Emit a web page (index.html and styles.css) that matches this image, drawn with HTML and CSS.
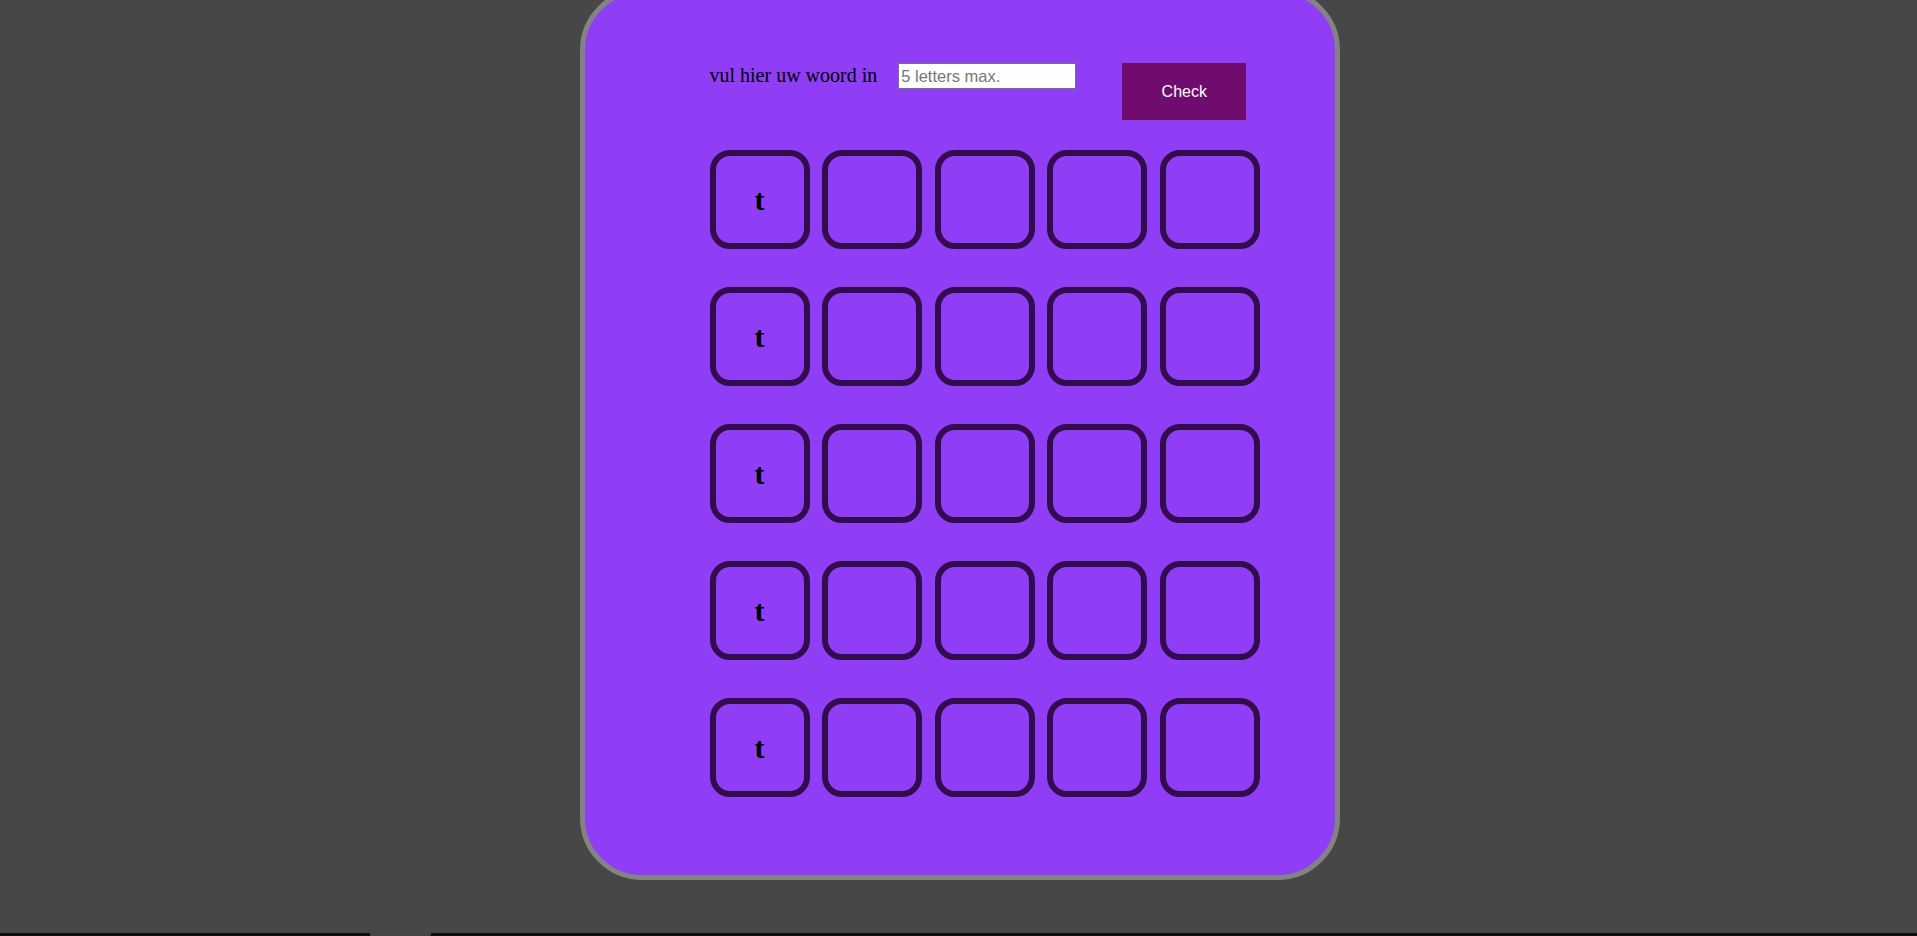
FILE: index.html
```html
<!DOCTYPE html>
<html lang="nl">
<head>
<meta charset="utf-8">
<title>Woord raden</title>
<link rel="stylesheet" href="styles.css">
</head>
<body>
<main class="card">
  <form class="entry">
    <label class="entry-label" for="woord">vul hier uw woord in</label>
    <input class="entry-input" id="woord" type="text" placeholder="5 letters max." maxlength="5">
    <button class="check-btn" type="button">Check</button>
  </form>
  <div class="board">
    <div class="row"><div class="tile">t</div><div class="tile"></div><div class="tile"></div><div class="tile"></div><div class="tile"></div></div>
    <div class="row"><div class="tile">t</div><div class="tile"></div><div class="tile"></div><div class="tile"></div><div class="tile"></div></div>
    <div class="row"><div class="tile">t</div><div class="tile"></div><div class="tile"></div><div class="tile"></div><div class="tile"></div></div>
    <div class="row"><div class="tile">t</div><div class="tile"></div><div class="tile"></div><div class="tile"></div><div class="tile"></div></div>
    <div class="row"><div class="tile">t</div><div class="tile"></div><div class="tile"></div><div class="tile"></div><div class="tile"></div></div>
  </div>
</main>
<div class="taskbar"><span class="taskbar-gap"></span></div>
</body>
</html>
```

FILE: styles.css
```css
html, body {
  margin: 0;
  padding: 0;
}
body {
  background: #474747;
  height: 936px;
  overflow: hidden;
  display: flex;
  flex-direction: column;
  align-items: center;
  font-family: "Liberation Serif", "Times New Roman", serif;
}
.card {
  box-sizing: border-box;
  width: 760px;
  height: 892px;
  margin-top: -12px;
  margin-left: 2px;
  background: #8f3ef6;
  border: 5px solid #838383;
  border-radius: 62px;
  padding: 70px 0 0 125px;
  display: flex;
  flex-direction: column;
  gap: 30px;
}
.entry {
  display: flex;
  align-items: flex-start;
  margin: 0;
}
.entry-label {
  font-size: 20px;
  line-height: 23px;
  color: #000;
  margin-top: 1px;
}
.entry-input {
  box-sizing: border-box;
  width: 178px;
  height: 26px;
  margin: 0 0 0 21px;
  padding: 1px 2px;
  border: 1px solid #767676;
  background: #fff;
  font-family: "Liberation Sans", Arial, sans-serif;
  font-size: 16.5px;
}
.entry-input::placeholder {
  color: #757575;
}
.check-btn {
  box-sizing: border-box;
  width: 124px;
  height: 57px;
  margin-left: 46px;
  border: none;
  background: #700c6d;
  color: #fff;
  font-family: "Liberation Sans", Arial, sans-serif;
  font-size: 16px;
  padding: 0;
}
.board {
  display: flex;
  flex-direction: column;
  gap: 38px;
}
.row {
  display: flex;
  gap: 12.5px;
}
.tile {
  box-sizing: border-box;
  width: 100px;
  height: 99px;
  border: 6px solid #330c4d;
  border-radius: 20px;
  display: flex;
  align-items: center;
  justify-content: center;
  font-family: "Liberation Serif", "Times New Roman", serif;
  font-weight: bold;
  font-size: 30px;
  color: #000;
}
.taskbar {
  margin-top: auto;
  align-self: stretch;
  height: 3px;
  background: #0e0f12;
}
.taskbar-gap {
  display: block;
  margin-left: 370px;
  width: 61px;
  height: 3px;
  background: #454545;
}
```
